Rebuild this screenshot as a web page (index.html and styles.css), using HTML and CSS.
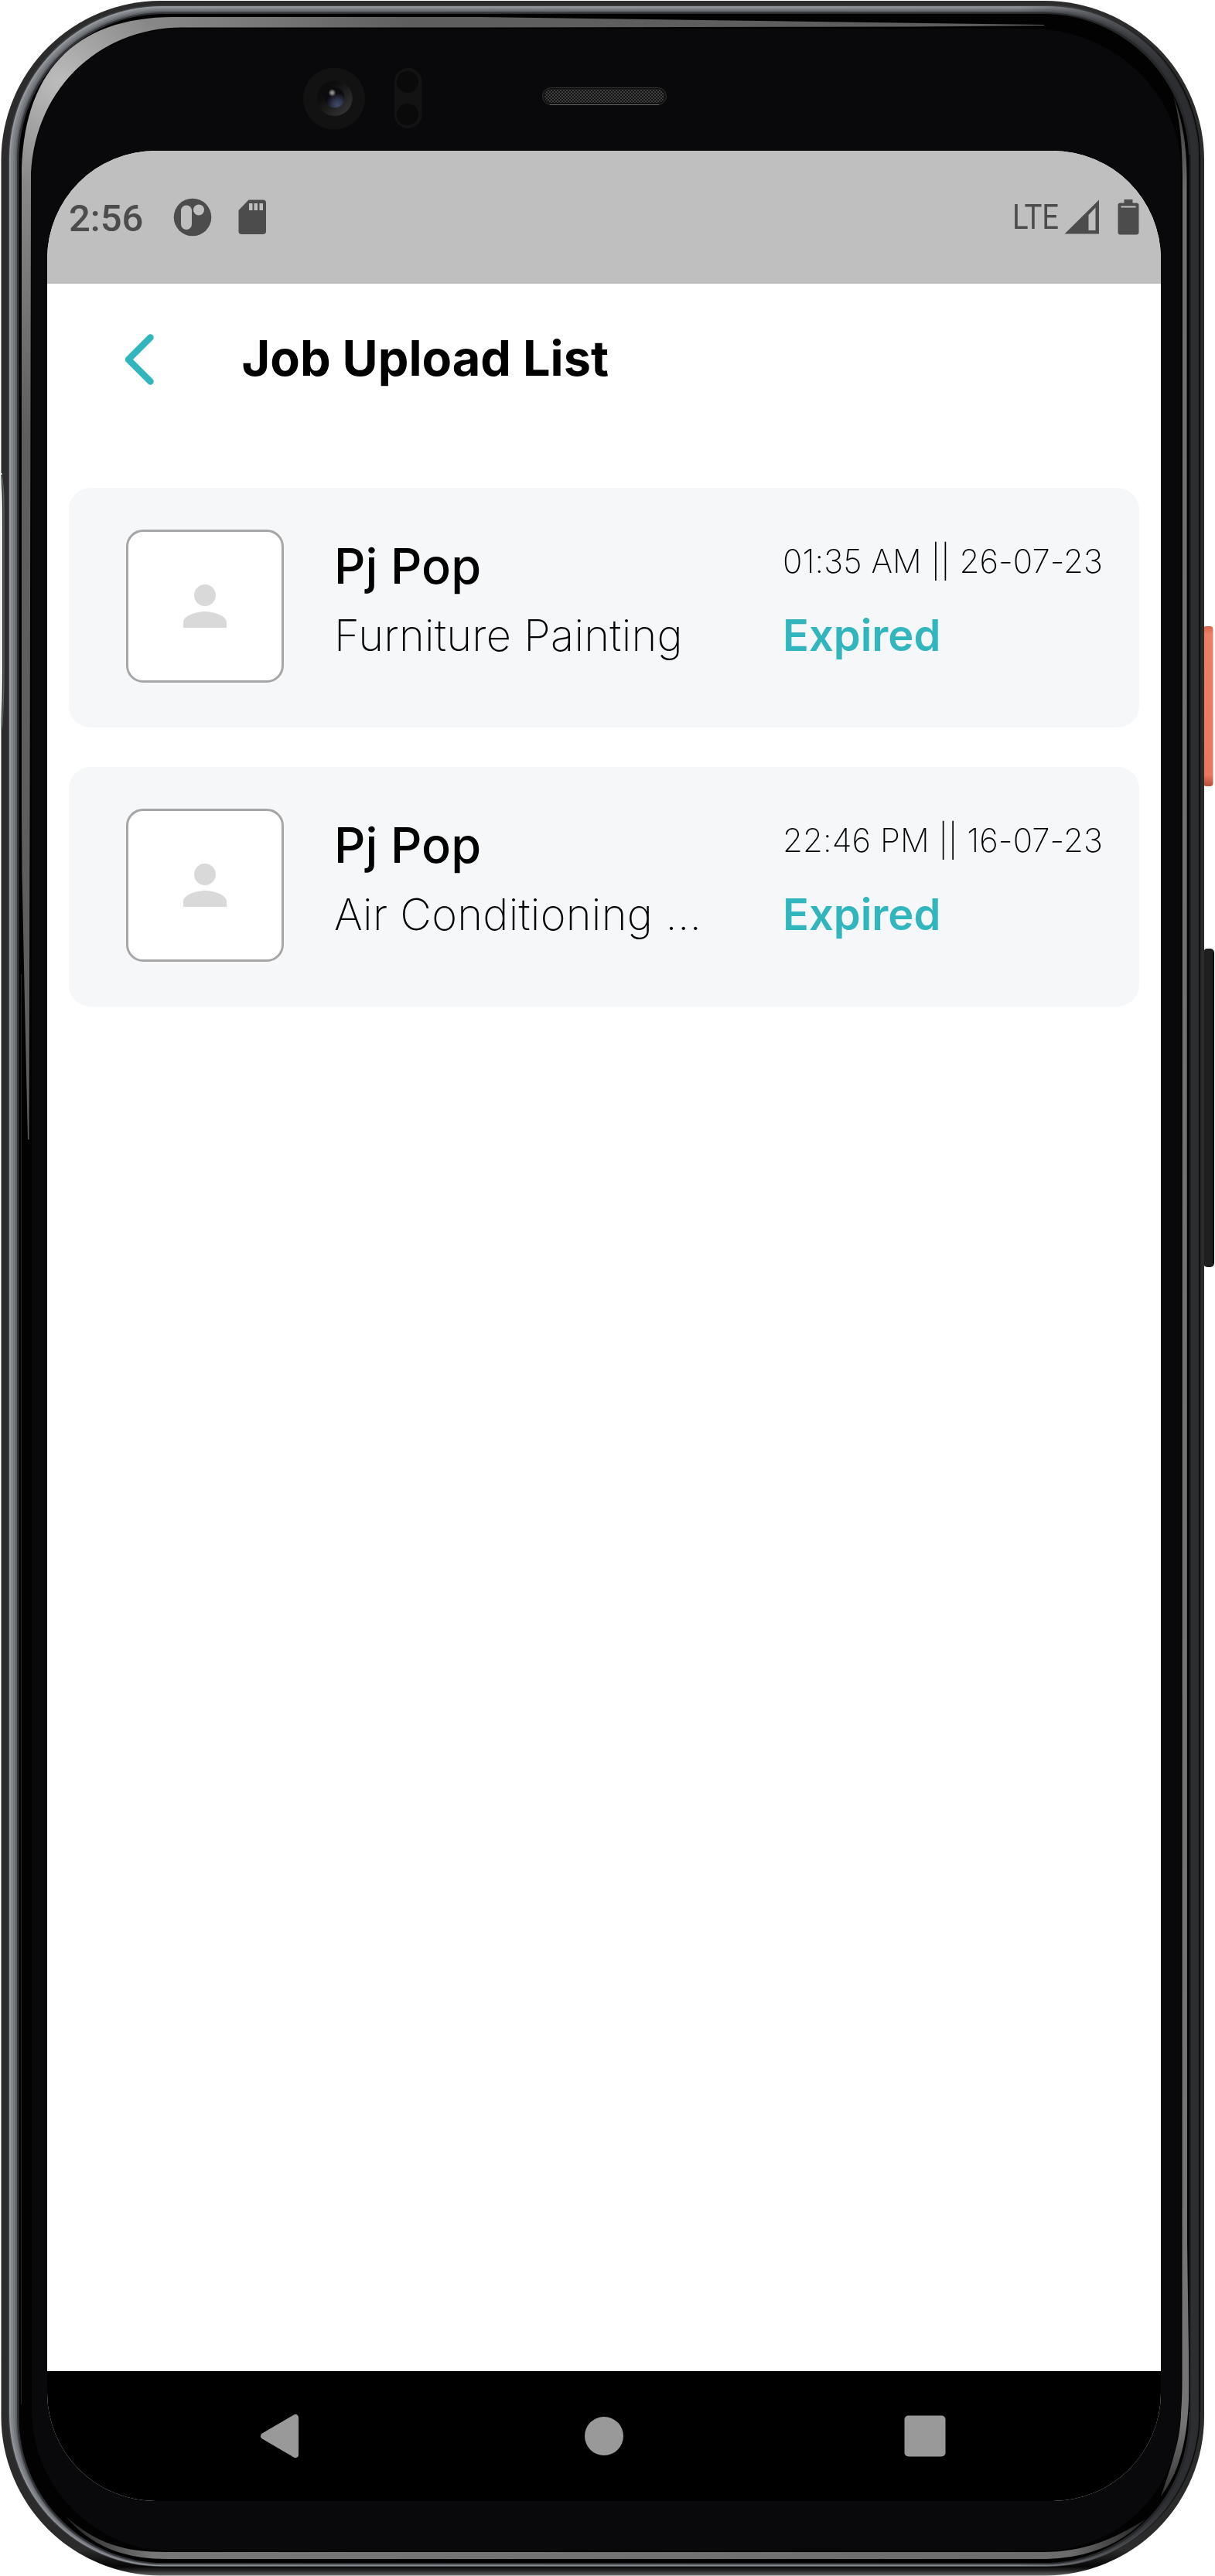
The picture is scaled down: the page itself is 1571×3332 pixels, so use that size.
FILE: index.html
```html
<!DOCTYPE html>
<html lang="en">
<head>
<meta charset="utf-8">
<title>Job Upload List</title>
<link rel="stylesheet" href="styles.css">
</head>
<body>
<div class="device">
  <svg class="frame" viewBox="0 0 1571 3332" aria-hidden="true">
    <defs>
      <linearGradient id="shell" x1="0" y1="0" x2="0" y2="1">
        <stop offset="0" stop-color="#2c2c2c"/><stop offset=".99" stop-color="#2b2b2b"/>
        <stop offset=".9965" stop-color="#060606"/><stop offset=".998" stop-color="#242424"/><stop offset="1" stop-color="#6a6a6a"/>
      </linearGradient>
      <linearGradient id="m1"><stop offset="0" stop-color="#3c3d40"/><stop offset=".9" stop-color="#3c3d40"/><stop offset=".99" stop-color="#0a0a0a"/></linearGradient>
      <linearGradient id="m2"><stop offset="0" stop-color="#96999e"/><stop offset=".85" stop-color="#8c8f94"/><stop offset=".98" stop-color="#26282a"/></linearGradient>
      <linearGradient id="m3"><stop offset="0" stop-color="#84878c"/><stop offset=".85" stop-color="#7f8287"/><stop offset=".98" stop-color="#2c2e31"/></linearGradient>
      <linearGradient id="m4"><stop offset="0" stop-color="#74777c"/><stop offset=".85" stop-color="#6c6f75"/><stop offset=".98" stop-color="#2c2e31"/></linearGradient>
      <linearGradient id="m5"><stop offset="0" stop-color="#5a5d62"/><stop offset=".85" stop-color="#54575c"/><stop offset=".98" stop-color="#2c2e31"/></linearGradient>
      <linearGradient id="m6"><stop offset="0" stop-color="#303236"/><stop offset=".98" stop-color="#242628"/></linearGradient>
      <radialGradient id="glare" gradientUnits="userSpaceOnUse" cx="75" cy="105" r="460">
        <stop offset="0" stop-color="#bcbcbc"/><stop offset=".3" stop-color="#888"/><stop offset=".6" stop-color="#777"/><stop offset="1" stop-color="#5e5e5e"/>
      </radialGradient>
      <linearGradient id="edge" x1="0" y1="0" x2="0" y2="1">
        <stop offset="0" stop-color="#333"/><stop offset=".04" stop-color="#6e6e6e"/><stop offset=".97" stop-color="#747474"/><stop offset="1" stop-color="#333"/>
      </linearGradient>
      <linearGradient id="foot">
        <stop offset="0" stop-color="#222"/><stop offset=".08" stop-color="#777"/><stop offset=".93" stop-color="#6c6c6c"/><stop offset="1" stop-color="#222"/>
      </linearGradient>
      <linearGradient id="power" x1="0" y1="0" x2="0" y2="1">
        <stop offset="0" stop-color="#d8664c"/><stop offset=".05" stop-color="#ee7f64"/><stop offset=".93" stop-color="#e9775b"/><stop offset="1" stop-color="#b94f38"/>
      </linearGradient>
      <linearGradient id="ring" x1="0" y1="0" x2="1" y2="1"><stop offset=".3" stop-color="#0c0c0c"/><stop offset="1" stop-color="#3c3c3c"/></linearGradient>
      <radialGradient id="lens" cx=".65" cy=".85" r=".6"><stop offset="0" stop-color="#414a6c"/><stop offset=".4" stop-color="#31374f"/><stop offset="1" stop-color="#0b0a0e"/></radialGradient>
      <radialGradient id="spark"><stop offset="0" stop-color="#a4a4a4"/><stop offset=".4" stop-color="#777"/><stop offset="1" stop-color="#777" stop-opacity="0"/></radialGradient>
      <pattern id="mesh" width="4" height="4" patternUnits="userSpaceOnUse">
        <rect width="4" height="4" fill="#121212"/><path d="M0 1h2M2 3h2" stroke="#6e6e6e" stroke-width="1.2"/>
      </pattern>
    </defs>
    <rect x="1556" y="810" width="12.5" height="207" rx="4" fill="url(#power)"/>
    <rect x="1556" y="1227" width="14" height="412" rx="5" fill="#1f1f1f"/>
    <path d="M1569 1232V1634" stroke="#0a0a0a" stroke-width="1.5"/>
    <rect x="1.5" y="1" width="1555.5" height="3330.5" rx="206" fill="url(#shell)"/>
    <path d="M0 612C3 635 3 640 3 700V860C3 905 2 925 0 944Z" fill="#eef1f0"/>
    <path d="M1.500 612C5.500 635 5 640 5 700V860C5 905 4 925 2 944" fill="none" stroke="#59625f" stroke-width="1.500"/>
    <path d="M1 612h1.500v2h-1.500z" fill="#fff"/>
    <rect x="10.500" y="6.500" width="1541.500" height="3313.500" rx="198" fill="url(#m1)"/>
    <rect x="12" y="8" width="1538.500" height="3311.300" rx="197" fill="url(#m2)"/>
    <rect x="14" y="10" width="1535" height="3308.600" rx="195" fill="url(#m3)"/>
    <rect x="17" y="12" width="1529" height="3306" rx="193" fill="url(#m4)"/>
    <rect x="20" y="14" width="1523" height="3303.300" rx="191" fill="url(#m5)"/>
    <rect x="22" y="16" width="1518" height="3300.600" rx="189" fill="url(#m6)"/>
    <rect x="24.500" y="18" width="1512.500" height="3297" rx="188" fill="#020203"/>
    <path d="M28 1050L28 230C28 95 95 22 225 22H620L1350 32V33L1180 34.500L620 35.500H235C125 36 40 120 40 235L38.500 1050L37.500 1474H36L32 1300L28.500 1130Z" fill="url(#glare)"/>
    <path d="M27.500 1260V3110" stroke="#242426" fill="none"/>
    <path d="M1517 123C1530 160 1534.500 190 1534.500 230L1535 2900L1537.500 3080C1537.500 3150 1527 3195 1501 3229C1518 3180 1528.500 3150 1528.500 3080L1529 230C1528.500 190 1527 160 1517 123Z" fill="url(#edge)"/>
    <path d="M1538 200V3120M1551.500 200V3120" stroke="#08080a" stroke-width="1.300"/>
    <path d="M85 3255C125 3290 160 3301 215 3301H1350C1400 3301 1440 3285 1482 3258C1445 3295 1400 3310 1345 3310H215C155 3310 115 3290 85 3255Z" fill="url(#foot)"/>
    <path fill="#09090b" d="M41 235C41 121 126 37 236 37H1332C1440 37 1527 120 1527 220V3117C1527 3218 1450 3300 1344 3300H224C123 3300 41 3218 41 3117Z"/>
    <circle cx="432" cy="127.500" r="40" fill="#121212"/>
    <circle cx="432.700" cy="127" r="23" fill="url(#ring)"/>
    <circle cx="432.700" cy="126.500" r="13" fill="url(#lens)"/>
    <circle cx="429.500" cy="120" r="5" fill="url(#spark)"/>
    <rect x="510" y="88" width="35.500" height="78" rx="17.700" fill="#131314"/>
    <circle cx="527" cy="106" r="14" fill="#0a0a0b"/><circle cx="527" cy="148" r="14" fill="#0a0a0b"/>
    <rect x="701.500" y="113.500" width="160" height="22" rx="11" fill="#101010" stroke="#333"/>
    <rect x="704" y="115.500" width="155" height="17.500" rx="8.500" fill="url(#mesh)"/>
    <path d="M711 135.500h141" stroke="#666" stroke-width="1.200"/>
  </svg>

  <div class="screen">
    <header class="status">
      <div class="status-left">
        <span class="clock">2:56</span>
        <svg class="ic-app" width="50" height="50" viewBox="0 0 50 50"><circle cx="25" cy="25" r="24.300"/><rect class="cut" x="10" y="9.500" width="14" height="31.500" rx="7"/><circle class="cut" cx="33" cy="15.500" r="7"/></svg>
        <svg class="ic-sd" width="36" height="46" viewBox="0 0 36 46"><path d="M13.500 .500H32Q36 .500 36 4.500V41Q36 45 32 45H4.500Q.500 45 .500 41V14Z"/><path class="cut" d="M14 5h4.500v9H14zM20.500 5H25v9h-4.500zM27.500 5H32v9h-4.500z"/></svg>
      </div>
      <div class="status-right">
        <svg class="ic-lte" width="70" height="60" viewBox="0 0 70 60"><text x="3" y="44.500" textLength="60" lengthAdjust="spacingAndGlyphs">LTE</text></svg>
        <svg class="ic-signal" width="46" height="46" viewBox="0 0 46 46"><path fill-rule="evenodd" d="M45 .500V44.500H.500ZM31.500 20V40H40.500V10.500Z"/></svg>
        <svg class="ic-battery" width="28" height="46" viewBox="0 0 28 46"><path d="M8.500 0h11v4.500h5Q27.500 4.500 27.500 7.500V42.500Q27.500 45.500 24.500 45.500H3.500Q.500 45.500 .500 42.500V7.500Q.500 4.500 3.500 4.500h5Z"/><path class="cut" d="M4.500 8.500h19v2h-19z"/></svg>
      </div>
    </header>

    <main class="content">
      <div class="appbar">
        <svg class="back" width="48" height="76" viewBox="0 0 48 76"><path d="M39.500 9.500L11 38L39.500 66.500"/></svg>
        <h1>Job Upload List</h1>
      </div>
      <div class="jobs">
        <article class="job">
          <div class="avatar"><svg width="84" height="84" viewBox="0 0 24 24"><path d="M12 12c2.210 0 4-1.790 4-4s-1.790-4-4-4-4 1.790-4 4 1.790 4 4 4zm0 2c-2.670 0-8 1.340-8 4v2h16v-2c0-2.660-5.330-4-8-4z"/></svg></div>
          <div class="who"><h2>Pj Pop</h2><p>Furniture Painting</p></div>
          <div class="when"><time>01:35 AM || 26-07-23</time><strong>Expired</strong></div>
        </article>
        <article class="job">
          <div class="avatar"><svg width="84" height="84" viewBox="0 0 24 24"><path d="M12 12c2.210 0 4-1.790 4-4s-1.790-4-4-4-4 1.790-4 4 1.790 4 4 4zm0 2c-2.670 0-8 1.340-8 4v2h16v-2c0-2.660-5.330-4-8-4z"/></svg></div>
          <div class="who"><h2>Pj Pop</h2><p>Air Conditioning ...</p></div>
          <div class="when"><time>22:46 PM || 16-07-23</time><strong>Expired</strong></div>
        </article>
      </div>
    </main>

    <nav class="nav">
      <svg width="60" height="60" viewBox="0 0 60 60"><path stroke-width="8" stroke-linejoin="round" d="M10 30L51 6V54Z"/></svg>
      <svg class="home" width="60" height="60" viewBox="0 0 60 60"><circle cx="30" cy="30" r="25"/></svg>
      <svg width="60" height="60" viewBox="0 0 60 60"><rect x="3.500" y="3.500" width="53" height="53" rx="5"/></svg>
    </nav>
  </div>
</div>
</body>
</html>
```
FILE: styles.css
```css
* { box-sizing: border-box; margin: 0; }

body { background: #fff; font-family: Inter, "Liberation Sans", sans-serif; color: #000; }

svg { display: block; flex: none; }

.device { position: relative; width: 1571px; height: 3332px; padding: 195px 70px 97px 61px; overflow: hidden; }

/* Hardware shell drawn behind the screen */
.frame { position: absolute; left: 0; top: 0; width: 1571px; height: 3332px; }

.screen { position: relative; height: 3040px; display: flex; flex-direction: column; border-radius: 140px; overflow: hidden; background: #fff; will-change: transform; }

.status { height: 172px; background: #bfbfbf; display: flex; justify-content: space-between; align-items: center; padding: 0 28px 0 28px; color: #4c4c4c; fill: #4c4c4c; }
.status .cut { fill: #bfbfbf; }
.status-left, .status-right { display: flex; align-items: center; }
.clock { font: 500 49px/60px Roboto, sans-serif; width: 135px; padding-top: 4px; }
.ic-sd { margin-left: 34px; }
.ic-lte { overflow: visible; }
.ic-lte text { font: 400 43.500px Roboto, sans-serif; }
.ic-battery { margin-left: 23px; }

.content { flex: 1; }

.appbar { height: 196px; display: flex; align-items: center; padding-left: 94px; }
.back { stroke: #32b6bd; stroke-width: 8.500px; stroke-linecap: round; stroke-linejoin: round; fill: none; }
.appbar h1 { font-size: 63px; font-weight: 700; line-height: 76px; margin: -5px 0 0 109.500px; }

.jobs { display: flex; flex-direction: column; gap: 51.500px; padding: 68px 28px 0; }
.job { height: 309.500px; border-radius: 28px; background: #f5f7f9; display: flex; padding: 54px 28px 0 73.500px; }
.avatar { width: 204.500px; height: 198px; border: 3.500px solid #a6a6a6; border-radius: 22px; background: #fff; display: grid; place-items: center; flex: none; }
.avatar svg { fill: #d9d9d9; }
.who { width: 645px; padding: 9px 0 0 65px; flex: none; }
.who h2 { font-size: 63px; font-weight: 500; line-height: 76px; }
.who p { font-size: 56px; font-weight: 200; line-height: 68px; margin-top: 18px; letter-spacing: .250px; white-space: nowrap; }
.when { display: flex; flex-direction: column; padding-top: 15px; white-space: nowrap; }
.when time { font-size: 42px; font-weight: 200; line-height: 51px; letter-spacing: .080px; }
.when strong { font-size: 56px; font-weight: 600; line-height: 68px; margin-top: 37px; color: #32b6bd; }

.nav { height: 168px; background: #000; display: flex; justify-content: space-between; align-items: center; padding: 0 275px 0 270px; fill: #999; stroke: none; }
.nav svg:first-child { stroke: #999; }
.nav .home { margin-left: 4px; }
```
